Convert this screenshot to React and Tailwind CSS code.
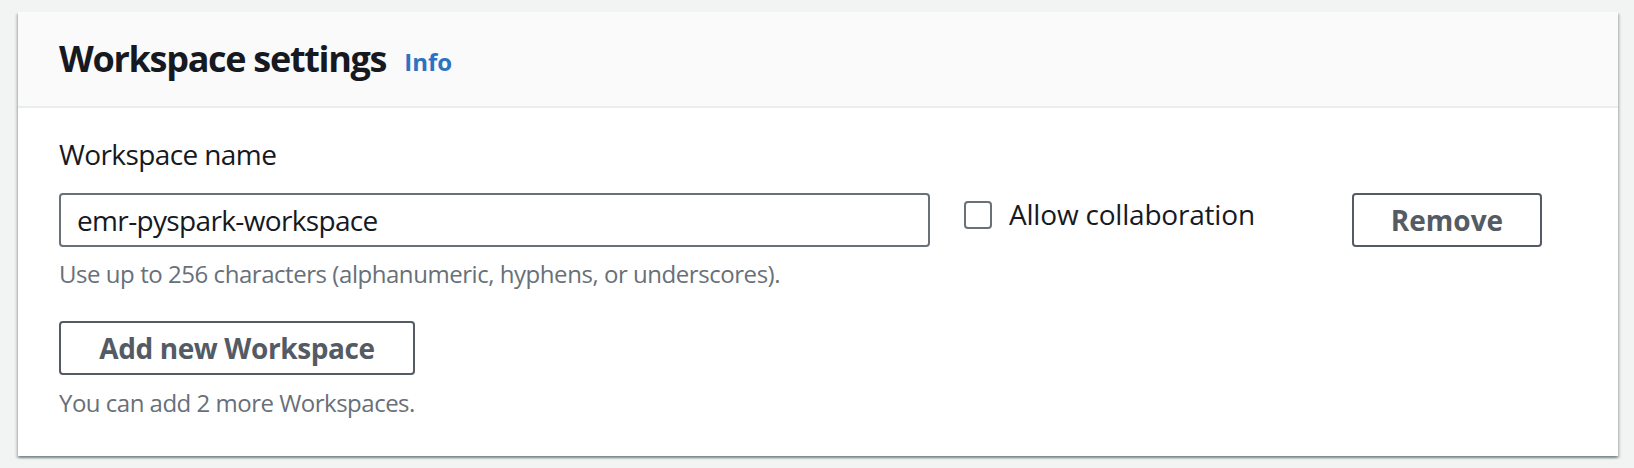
export default function App() {
  const font = { fontFamily: '"Open Sans", "Noto Sans", sans-serif' };
  return (
    <div className="w-[1634px] h-[468px] bg-[#f2f3f3] pt-[12px] pl-[18px] pr-[16px]" style={font}>
      <div className="w-[1600px] h-[444px] bg-white shadow-[0_2px_2px_0_rgba(0,28,36,0.3),2px_2px_2px_0_rgba(0,28,36,0.15),-2px_2px_2px_0_rgba(0,28,36,0.15)]">
        <div className="h-[96px] bg-[#fafafa] border-b-2 border-[#eaeded] pl-[41px] flex items-center">
          <h2 className="text-[36px] leading-[44px] font-bold text-[#16191f] tracking-[-1.3px]">Workspace settings</h2>
          <a className="ml-[18px] mt-[6px] text-[24px] font-bold text-[#2d72c0]">Info</a>
        </div>
        <div className="pl-[41px] pt-[24px]">
          <div className="text-[28px] leading-[44px] text-[#16191f] tracking-[-0.6px]">Workspace name</div>
          <div className="flex items-start mt-[17px]">
            <div className="w-[871px] h-[54px] border-2 border-[#687078] rounded-[4px] flex items-center pl-[16px] text-[28px] text-[#16191f] tracking-[-0.65px]">
              emr-pyspark-workspace
            </div>
            <div className="w-[388px] ml-[34px] flex items-center h-[42px]">
              <div className="w-[28px] h-[28px] border-2 border-[#687078] rounded-[4px] mt-[2px]" />
              <span className="ml-[17px] text-[28px] text-[#16191f] tracking-[-0.2px]">Allow collaboration</span>
            </div>
            <button className="w-[190px] h-[54px] border-2 border-[#545b64] rounded-[4px] text-[28px] font-bold text-[#545b64]">Remove</button>
          </div>
          <div className="mt-[11px] text-[24px] leading-[32px] text-[#687078] tracking-[-0.45px]">Use up to 256 characters (alphanumeric, hyphens, or underscores).</div>
          <button className="mt-[31px] w-[356px] h-[54px] border-2 border-[#545b64] rounded-[4px] text-[28px] font-bold text-[#545b64] tracking-[-0.4px]">Add new Workspace</button>
          <div className="mt-[12px] text-[24px] leading-[32px] text-[#687078] tracking-[-0.5px]">You can add 2 more Workspaces.</div>
        </div>
      </div>
    </div>
  );
}
